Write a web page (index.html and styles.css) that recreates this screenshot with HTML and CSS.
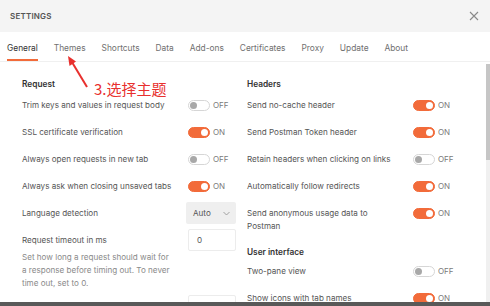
FILE: index.html
```html
<!DOCTYPE html>
<html>
<head>
    <title>Settings</title>
    <link rel="stylesheet" href="styles.css">
</head>
<body>
    <div class="window">
        <div class="header">
            <span class="title">SETTINGS</span>
            <svg class="close" width="10" height="10" viewBox="0 0 10 10">
                <path d="M1 1 L9 9 M9 1 L1 9" stroke="#8a8a8a" stroke-width="1.1" fill="none"/>
            </svg>
        </div>

        <div class="tabs">
            <span class="tab active">General</span>
            <span class="tab">Themes</span>
            <span class="tab">Shortcuts</span>
            <span class="tab">Data</span>
            <span class="tab">Add-ons</span>
            <span class="tab">Certificates</span>
            <span class="tab">Proxy</span>
            <span class="tab">Update</span>
            <span class="tab">About</span>
        </div>

        <div class="main">
            <div class="panel">
                <div class="column">
                    <div class="section-title">Request</div>
                    <div class="row">
                        <span class="label">Trim keys and values in request body</span>
                        <span class="control"><span class="toggle"></span>OFF</span>
                    </div>
                    <div class="row">
                        <span class="label">SSL certificate verification</span>
                        <span class="control"><span class="toggle on"></span>ON</span>
                    </div>
                    <div class="row">
                        <span class="label">Always open requests in new tab</span>
                        <span class="control"><span class="toggle"></span>OFF</span>
                    </div>
                    <div class="row">
                        <span class="label">Always ask when closing unsaved tabs</span>
                        <span class="control"><span class="toggle on"></span>ON</span>
                    </div>
                    <div class="row">
                        <span class="label">Language detection</span>
                        <span class="select">Auto
                            <svg width="7" height="5" viewBox="0 0 7 5"><path d="M0.5 1 L3.5 4 L6.5 1" stroke="#999" stroke-width="0.9" fill="none"/></svg>
                        </span>
                    </div>
                    <div class="row tall">
                        <div class="label">
                            <div class="label-title">Request timeout in ms</div>
                            <div class="desc">Set how long a request should wait for a response before timing out. To never time out, set to 0.</div>
                        </div>
                        <span class="input">0</span>
                    </div>
                    <div class="row tall">
                        <div class="label"></div>
                        <span class="input"></span>
                    </div>
                </div>

                <div class="column">
                    <div class="section-title">Headers</div>
                    <div class="row">
                        <span class="label">Send no-cache header</span>
                        <span class="control"><span class="toggle on"></span>ON</span>
                    </div>
                    <div class="row">
                        <span class="label">Send Postman Token header</span>
                        <span class="control"><span class="toggle on"></span>ON</span>
                    </div>
                    <div class="row">
                        <span class="label">Retain headers when clicking on links</span>
                        <span class="control"><span class="toggle"></span>OFF</span>
                    </div>
                    <div class="row">
                        <span class="label">Automatically follow redirects</span>
                        <span class="control"><span class="toggle on"></span>ON</span>
                    </div>
                    <div class="row multi">
                        <span class="label">Send anonymous usage data to Postman</span>
                        <span class="control"><span class="toggle on"></span>ON</span>
                    </div>
                    <div class="section-title second">User interface</div>
                    <div class="row">
                        <span class="label">Two-pane view</span>
                        <span class="control"><span class="toggle"></span>OFF</span>
                    </div>
                    <div class="row">
                        <span class="label">Show icons with tab names</span>
                        <span class="control"><span class="toggle on"></span>ON</span>
                    </div>
                </div>
            </div>
            <div class="scrollbar"><div class="thumb"></div></div>
        </div>
        <div class="bottom-edge"></div>

        <div class="note">
            <svg width="100" height="100" viewBox="0 0 100 100">
                <path d="M87 87 L72.5 63" stroke="#e8302e" stroke-width="2" fill="none"/>
                <polygon points="68,56 76,61.5 69.5,66" fill="#e8302e"/>
            </svg>
            <span class="note-text">3.选择主题</span>
        </div>
    </div>
</body>
</html>
```

FILE: styles.css
```css
body {
    margin: 0;
    padding: 0;
    font-family: Inter, "Noto Sans", sans-serif;
    background-color: #ffffff;
}

.window {
    position: relative;
    width: 490px;
    height: 306px;
    overflow: hidden;
    display: flex;
    flex-direction: column;
}

.header {
    height: 32px;
    flex: none;
    background-color: #f4f4f4;
    padding: 0 11px 0 10px;
    display: flex;
    align-items: center;
    justify-content: space-between;
}

.title {
    font-size: 8px;
    font-weight: 600;
    color: #555555;
    letter-spacing: 0.2px;
}

.tabs {
    height: 29px;
    flex: none;
    display: flex;
    align-items: stretch;
    gap: 15.9px;
    padding-left: 7px;
    border-bottom: 1px solid #f0f0f0;
}

.tab {
    font-size: 8.4px;
    color: #707070;
    display: flex;
    align-items: center;
    border-bottom: 2px solid transparent;
    padding-top: 5px;
}

.tab.active {
    color: #333333;
    border-bottom-color: #f26b3a;
}

.main {
    flex: 1;
    display: flex;
    min-height: 0;
}

.panel {
    flex: 1;
    display: flex;
    gap: 10px;
    padding: 15px 0 0 22px;
    overflow: hidden;
}

.column {
    width: 215px;
    display: flex;
    flex-direction: column;
    gap: 5px;
}

.section-title {
    height: 16px;
    box-sizing: border-box;
    padding-top: 2px;
    font-size: 8.3px;
    font-weight: 600;
    color: #333333;
    display: flex;
    align-items: center;
}

.section-title.second {
    margin-top: 7px;
    margin-bottom: -2px;
}

.row {
    height: 22px;
    flex: none;
    display: flex;
    align-items: center;
    font-size: 8.1px;
    color: #555555;
}

.row .label {
    width: 166px;
    flex: none;
}

.row.multi {
    height: auto;
    align-items: flex-start;
}

.row.multi .label {
    width: 150px;
    margin-right: 16px;
    padding-top: 5px;
    line-height: 13px;
}

.row.multi .control {
    height: 22px;
}

.row.tall {
    height: auto;
    align-items: flex-start;
}

.row.tall .label {
    width: 152px;
    margin-right: 14px;
}

.label-title {
    height: 22px;
    display: flex;
    align-items: center;
}

.desc {
    line-height: 13px;
    color: #8a8a8a;
}

.control {
    display: flex;
    align-items: center;
    gap: 3px;
    font-size: 8px;
    color: #7a7a7a;
}

.toggle {
    position: relative;
    width: 22px;
    height: 11px;
    box-sizing: border-box;
    border: 1px solid #d6d6d6;
    border-radius: 6px;
    background-color: #ffffff;
}

.toggle::after {
    content: "";
    position: absolute;
    top: 1px;
    left: 1px;
    width: 7px;
    height: 7px;
    border-radius: 50%;
    background-color: #a8a8a8;
}

.toggle.on {
    border-color: #f26b3a;
    background-color: #f26b3a;
}

.toggle.on::after {
    left: auto;
    right: 1px;
    background-color: #ffffff;
}

.select {
    margin-left: -2px;
    width: 50px;
    height: 22px;
    box-sizing: border-box;
    padding: 0 6px 0 7px;
    background-color: #efefef;
    border-radius: 2px;
    display: flex;
    align-items: center;
    justify-content: space-between;
    color: #555555;
}

.input {
    width: 48px;
    height: 22px;
    box-sizing: border-box;
    border: 1px solid #ececec;
    border-radius: 2px;
    padding-left: 8px;
    display: flex;
    align-items: center;
    color: #555555;
}

.scrollbar {
    width: 4px;
    flex: none;
    margin: 2px 0 0 0;
    background-color: #f0f0f0;
}

.thumb {
    height: 96px;
    background-color: #c6c6c6;
}

.bottom-edge {
    height: 4px;
    flex: none;
    background-color: #595959;
}

.note {
    position: absolute;
    left: 0;
    top: 0;
}

.note svg {
    position: absolute;
    left: 0;
    top: 0;
}

.note-text {
    position: absolute;
    left: 94px;
    top: 78px;
    font-family: "Noto Sans CJK SC", sans-serif;
    font-size: 15px;
    color: #e8302e;
    white-space: nowrap;
}
```
